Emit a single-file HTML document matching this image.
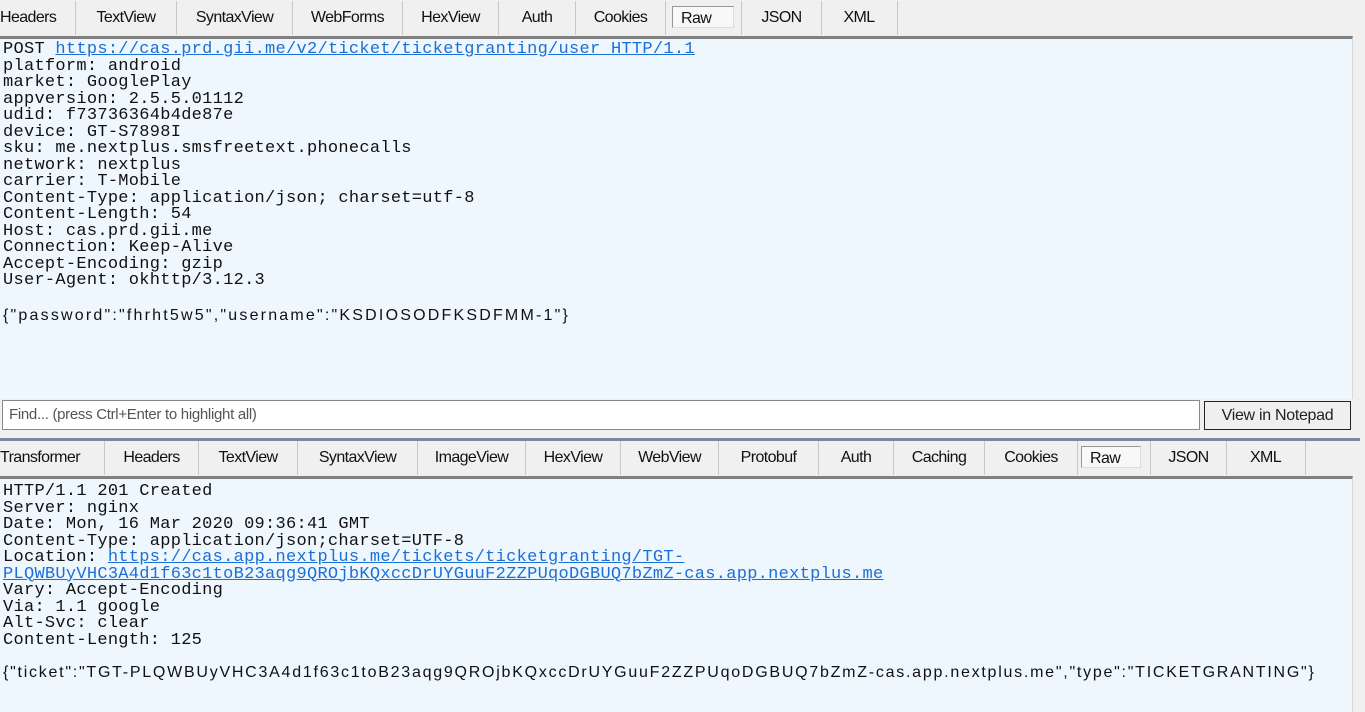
<!DOCTYPE html>
<html><head><style>
html,body{margin:0;padding:0;width:1365px;height:712px;overflow:hidden;background:#f0f0f0;position:relative}
.tabs{position:absolute;left:0;height:34px;font-family:"Liberation Sans",sans-serif;font-size:16px;color:#111;letter-spacing:-0.6px}
.tab{position:absolute;top:0;height:34px;line-height:34px;text-align:center;border-right:1px solid #c8c8c8}
.raw{position:absolute;background:#f8f8f8;border:1px solid #999;border-right-color:#ddd;border-bottom-color:#ddd;height:22px;line-height:24px;text-align:left;padding-left:8px;box-sizing:border-box}
.pane{position:absolute;left:0;width:1353px;background:#eef6fe;border-top:3px solid #808080;box-sizing:border-box;border-right:1px solid #d8d8d8}
.mono{font-family:"Liberation Mono",monospace;font-size:17px;line-height:16.5px;color:#111;white-space:pre;padding-left:3px;letter-spacing:0.28px}
a{color:#1b6fd6;text-decoration:underline}
.js{font-family:"Liberation Sans",sans-serif;font-size:16px;color:#111;white-space:pre;position:absolute;left:3px}
</style></head><body>
<div class="tabs" style="top:1px;width:1365px">
<div class="tab" style="left:0;width:75px;text-align:left">Headers</div>
<div class="tab" style="left:76px;width:100px">TextView</div>
<div class="tab" style="left:177px;width:115px">SyntaxView</div>
<div class="tab" style="left:293px;width:109px">WebForms</div>
<div class="tab" style="left:403px;width:95px">HexView</div>
<div class="tab" style="left:499px;width:76px">Auth</div>
<div class="tab" style="left:576px;width:89px">Cookies</div>
<div class="raw" style="left:672px;top:5px;width:62px">Raw</div>
<div class="tab" style="left:741px;width:79px;border-left:1px solid #c8c8c8">JSON</div>
<div class="tab" style="left:821px;width:76px">XML</div>
</div>
<div class="pane" style="top:36px;height:363px">
<div class="mono" style="padding-top:3px">POST <a>https://cas.prd.gii.me/v2/ticket/ticketgranting/user HTTP/1.1</a>
platform: android
market: GooglePlay
appversion: 2.5.5.01112
udid: f73736364b4de87e
device: GT-S7898I
sku: me.nextplus.smsfreetext.phonecalls
network: nextplus
carrier: T-Mobile
Content-Type: application/json; charset=utf-8
Content-Length: 54
Host: cas.prd.gii.me
Connection: Keep-Alive
Accept-Encoding: gzip
User-Agent: okhttp/3.12.3</div>
<div class="js" style="top:268px;letter-spacing:2.2px">{"password":"fhrht5w5","username":"KSDIOSODFKSDFMM-1"}</div>
</div>
<div style="position:absolute;left:2px;top:400px;width:1198px;height:30px;background:#fff;border:1px solid #888;box-sizing:border-box;font-family:'Liberation Sans',sans-serif;font-size:15px;color:#555;line-height:28px;padding-left:6px;letter-spacing:-0.3px">Find... (press Ctrl+Enter to highlight all)</div>
<div style="position:absolute;left:1204px;top:401px;width:147px;height:29px;background:#efefef;border:1px solid #222;box-sizing:border-box;font-family:'Liberation Sans',sans-serif;font-size:16px;color:#222;line-height:27px;text-align:center;letter-spacing:-0.3px">View in Notepad</div>
<div style="position:absolute;left:0;top:438px;width:1360px;height:3px;background:#7a8a9a"></div>
<div class="tabs" style="top:441px;width:1365px">
<div class="tab" style="left:0;width:104px;text-align:left">Transformer</div>
<div class="tab" style="left:105px;width:93px">Headers</div>
<div class="tab" style="left:199px;width:98px">TextView</div>
<div class="tab" style="left:298px;width:119px">SyntaxView</div>
<div class="tab" style="left:418px;width:107px">ImageView</div>
<div class="tab" style="left:526px;width:94px">HexView</div>
<div class="tab" style="left:621px;width:97px">WebView</div>
<div class="tab" style="left:719px;width:99px">Protobuf</div>
<div class="tab" style="left:819px;width:74px">Auth</div>
<div class="tab" style="left:894px;width:90px">Caching</div>
<div class="tab" style="left:985px;width:92px">Cookies</div>
<div class="raw" style="left:1081px;top:5px;width:60px">Raw</div>
<div class="tab" style="left:1150px;width:75px;border-left:1px solid #c8c8c8">JSON</div>
<div class="tab" style="left:1226px;width:79px">XML</div>
</div>
<div class="pane" style="top:476px;height:236px">
<div class="mono" style="padding-top:5px">HTTP/1.1 201 Created
Server: nginx
Date: Mon, 16 Mar 2020 09:36:41 GMT
Content-Type: application/json;charset=UTF-8
Location: <a>https://cas.app.nextplus.me/tickets/ticketgranting/TGT-</a>
<a>PLQWBUyVHC3A4d1f63c1toB23aqg9QROjbKQxccDrUYGuuF2ZZPUqoDGBUQ7bZmZ-cas.app.nextplus.me</a>
Vary: Accept-Encoding
Via: 1.1 google
Alt-Svc: clear
Content-Length: 125</div>
<div class="js" style="top:185px;letter-spacing:1.75px">{"ticket":"TGT-PLQWBUyVHC3A4d1f63c1toB23aqg9QROjbKQxccDrUYGuuF2ZZPUqoDGBUQ7bZmZ-cas.app.nextplus.me","type":"TICKETGRANTING"}</div>
</div>
</body></html>
